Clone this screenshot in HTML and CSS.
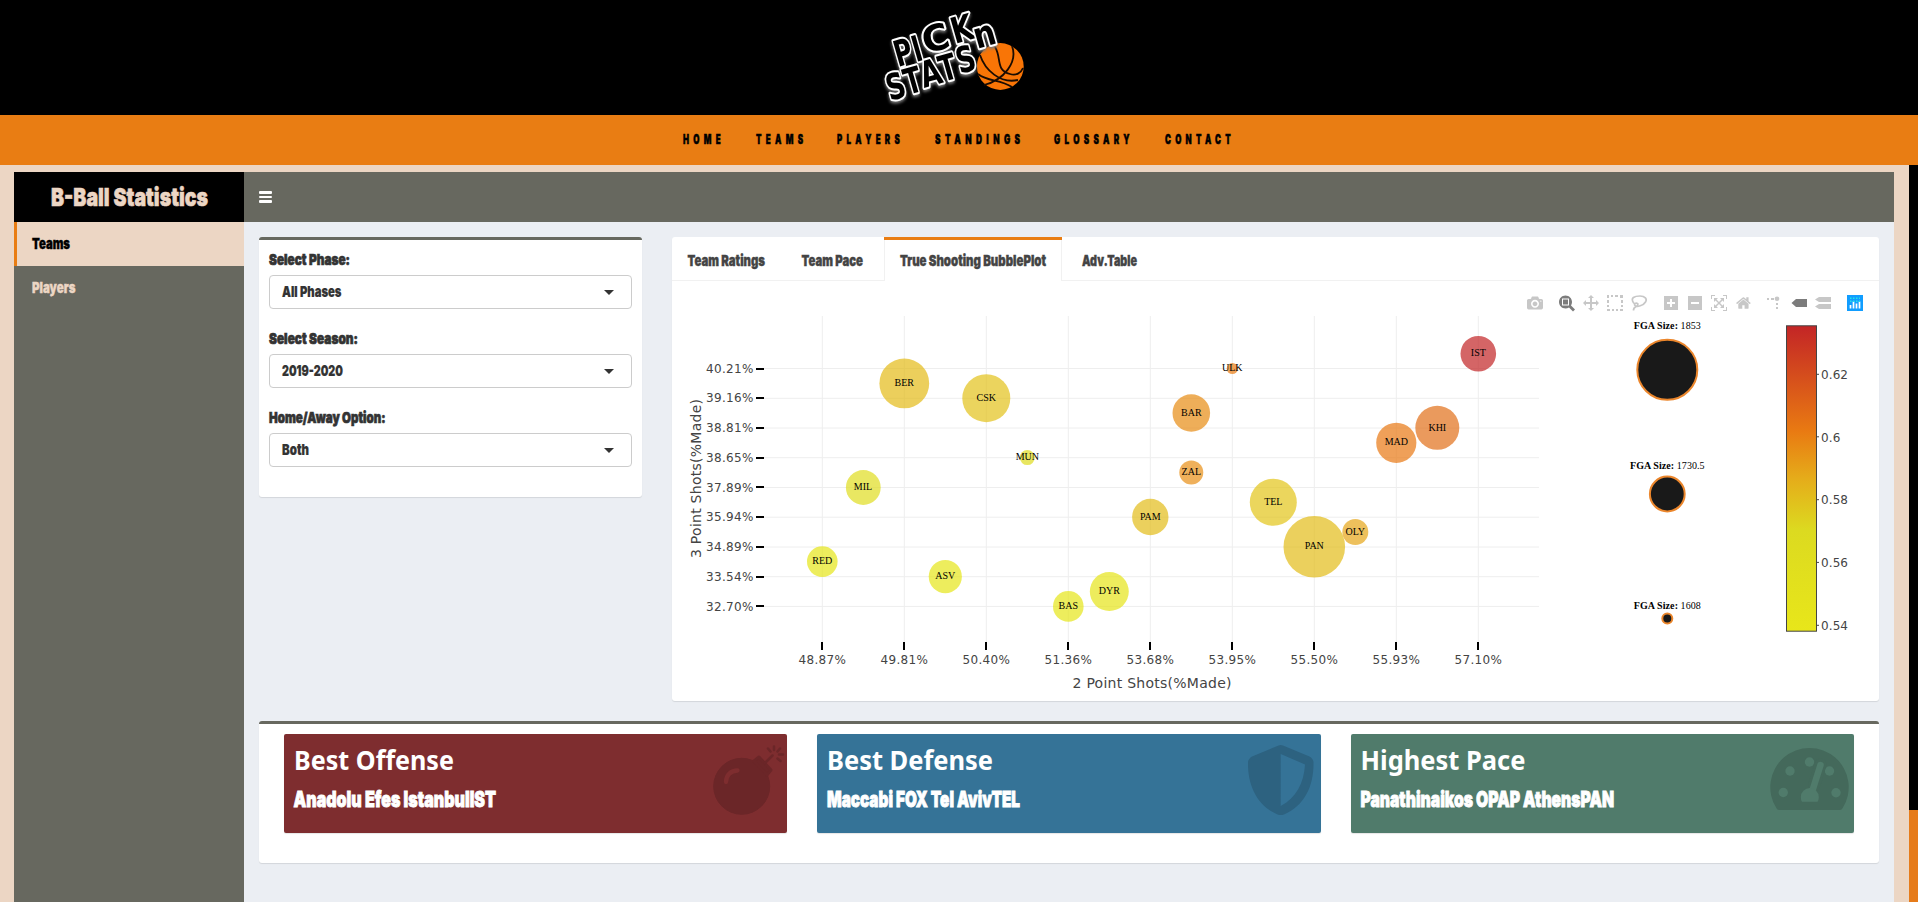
FILE: index.html
```html
<!DOCTYPE html>
<html lang="en">
<head>
<meta charset="utf-8">
<title>Pick n Stats</title>
<link rel="stylesheet" href="styles.css">
</head>
<body>
<header class="masthead">
  <svg class="logo" width="150" height="115" viewBox="880 0 150 115">
    <circle cx="1000.3" cy="66.5" r="23.4" fill="#f97506"/>
    <g fill="none" stroke="#1a0c02" stroke-width="1.8">
      <path d="M980 55C985 70 1000 84 1018 80M995 47C1002 58 995 70 1010 74C1016 76 1021 73 1023 68M1012 46C1018 62 1004 80 984 85M978 74C988 82 1000 79 1012 87"/>
    </g>
    <g class="logo-text">
      <text transform="translate(898 67) rotate(-16)" textLength="18" lengthAdjust="spacingAndGlyphs">P</text>
      <text transform="translate(916 62) rotate(-16)" textLength="9" lengthAdjust="spacingAndGlyphs">I</text>
      <text transform="translate(926 54) rotate(-16)" textLength="27" lengthAdjust="spacingAndGlyphs">C</text>
      <text transform="translate(955 44) rotate(-16)" textLength="22" lengthAdjust="spacingAndGlyphs">K</text>
      <text transform="translate(977 49) rotate(-16)" textLength="22" lengthAdjust="spacingAndGlyphs">n</text>
      <text transform="translate(890 101) rotate(-16)" textLength="19" lengthAdjust="spacingAndGlyphs">S</text>
      <text transform="translate(908 95) rotate(-16)" textLength="17" lengthAdjust="spacingAndGlyphs">T</text>
      <text transform="translate(924 88) rotate(-16)" textLength="21" lengthAdjust="spacingAndGlyphs">A</text>
      <text transform="translate(943 82) rotate(-16)" textLength="17" lengthAdjust="spacingAndGlyphs">T</text>
      <text transform="translate(960 74) rotate(-16)" textLength="19" lengthAdjust="spacingAndGlyphs">S</text>
    </g>
  </svg>
</header>
<nav class="nav">
  <svg width="44" height="20"><text y="14" textLength="42" lengthAdjust="spacingAndGlyphs">HOME</text></svg>
  <svg width="53" height="20"><text y="14" textLength="51.5" lengthAdjust="spacingAndGlyphs">TEAMS</text></svg>
  <svg width="69" height="20"><text y="14" textLength="67" lengthAdjust="spacingAndGlyphs">PLAYERS</text></svg>
  <svg width="91" height="20"><text y="14" textLength="89.5" lengthAdjust="spacingAndGlyphs">STANDINGS</text></svg>
  <svg width="82" height="20"><text y="14" textLength="80" lengthAdjust="spacingAndGlyphs">GLOSSARY</text></svg>
  <svg width="72" height="20"><text y="14" textLength="70" lengthAdjust="spacingAndGlyphs">CONTACT</text></svg>
</nav>
<div class="stage">
  <div class="app">
    <div class="brand"><svg width="157" height="30"><text class="brand-text" y="23.5" textLength="157" lengthAdjust="spacingAndGlyphs">B-Ball Statistics</text></svg></div>
    <div class="topbar"><i></i><i></i><i></i></div>
    <aside class="side">
      <a class="item active"><svg width="50" height="20"><text y="15" textLength="38" lengthAdjust="spacingAndGlyphs">Teams</text></svg></a>
      <a class="item"><svg width="50" height="20"><text y="15" textLength="43.5" lengthAdjust="spacingAndGlyphs">Players</text></svg></a>
    </aside>
    <main class="content">
      <div class="row">
        <section class="box filters">
          <svg class="label" width="200" height="20"><text y="15" textLength="81" lengthAdjust="spacingAndGlyphs">Select Phase:</text></svg>
          <div class="select"><svg width="200" height="20"><text y="15" textLength="59.5" lengthAdjust="spacingAndGlyphs">All Phases</text></svg><b></b></div>
          <svg class="label" width="200" height="20"><text y="15" textLength="89" lengthAdjust="spacingAndGlyphs">Select Season:</text></svg>
          <div class="select"><svg width="200" height="20"><text y="15" textLength="61" lengthAdjust="spacingAndGlyphs">2019-2020</text></svg><b></b></div>
          <svg class="label" width="200" height="20"><text y="15" textLength="116.5" lengthAdjust="spacingAndGlyphs">Home/Away Option:</text></svg>
          <div class="select"><svg width="200" height="20"><text y="15" textLength="27" lengthAdjust="spacingAndGlyphs">Both</text></svg><b></b></div>
        </section>
        <section class="box tabs">
          <div class="tablist">
            <div class="tab"><svg width="78" height="20"><text x="-.5" y="15" textLength="77.5" lengthAdjust="spacingAndGlyphs">Team Ratings</text></svg></div>
            <div class="tab"><svg width="62" height="20"><text x="-.5" y="15" textLength="61.5" lengthAdjust="spacingAndGlyphs">Team Pace</text></svg></div>
            <div class="tab on"><svg width="146" height="20"><text y="15" textLength="146" lengthAdjust="spacingAndGlyphs">True Shooting BubblePlot</text></svg></div>
            <div class="tab"><svg width="56" height="20"><text x="-1" y="15" textLength="55" lengthAdjust="spacingAndGlyphs">Adv.Table</text></svg></div>
          </div>
          <svg class="plot" width="1207" height="420" viewBox="672 281 1207 420">
            <defs>
              <linearGradient id="scale" x1="0" y1="0" x2="0" y2="1">
                <stop offset="0" stop-color="#c32526"/>
                <stop offset=".345" stop-color="#e97a12"/>
                <stop offset=".5" stop-color="#e5ac1a"/>
                <stop offset=".67" stop-color="#dcda20"/>
                <stop offset="1" stop-color="#e8e61a"/>
              </linearGradient>
            </defs>
            <path class="grid" d="M822.3 316V642M904.3 316V642M986.3 316V642M1068.3 316V642M1150.3 316V642M1232.3 316V642M1314.3 316V642M1396.3 316V642M1478.3 316V642M764 368.5H1539M764 398.3H1539M764 428H1539M764 457.7H1539M764 487.5H1539M764 517.2H1539M764 547H1539M764 576.7H1539M764 606.4H1539"/>
            <path class="ticks" d="M822 642v8M904 642v8M986 642v8M1068 642v8M1150 642v8M1232 642v8M1314 642v8M1396 642v8M1478 642v8M756 369h8M756 398h8M756 428h8M756 458h8M756 487h8M756 517h8M756 547h8M756 577h8M756 606h8"/>
            <g class="bubbles">
              <circle cx="822.3" cy="561.6" r="15.3" fill="#e6e619"/>
              <circle cx="863.3" cy="487.5" r="17.4" fill="#e0dd20"/>
              <circle cx="904.3" cy="383.4" r="24.9" fill="#e4bb18"/>
              <circle cx="945.3" cy="576.6" r="16.6" fill="#e6e619"/>
              <circle cx="986.3" cy="398.2" r="24" fill="#e3c21b"/>
              <circle cx="1027.3" cy="457.6" r="7.5" fill="#dfdc1f"/>
              <circle cx="1068.3" cy="606.4" r="15.3" fill="#e6e619"/>
              <circle cx="1109.3" cy="591.6" r="19.5" fill="#e6e519"/>
              <circle cx="1150.3" cy="517" r="18.2" fill="#e3bd19"/>
              <circle cx="1191.3" cy="413" r="18.8" fill="#e88c14"/>
              <circle cx="1191.3" cy="472.4" r="12" fill="#e99016"/>
              <circle cx="1232.3" cy="368.5" r="5.6" fill="#e97c12"/>
              <circle cx="1273.3" cy="502.3" r="23.5" fill="#e3c51a"/>
              <circle cx="1314.3" cy="546.8" r="30.8" fill="#e3bd19"/>
              <circle cx="1355.3" cy="532" r="13" fill="#e6a618"/>
              <circle cx="1396.3" cy="442.8" r="20.1" fill="#e97914"/>
              <circle cx="1437.3" cy="427.8" r="22" fill="#e27019"/>
              <circle cx="1478.3" cy="353.7" r="17.8" fill="#c32526"/>
            </g>
            <g class="names">
              <text x="822.3" y="564">RED</text><text x="863" y="490">MIL</text><text x="904.3" y="386">BER</text><text x="945.3" y="579">ASV</text><text x="986.3" y="401">CSK</text><text x="1027.3" y="460">MUN</text><text x="1068.3" y="609">BAS</text><text x="1109.3" y="594">DYR</text><text x="1150.3" y="520">PAM</text><text x="1191.3" y="416">BAR</text><text x="1191.3" y="475">ZAL</text><text x="1232.3" y="371">ULK</text><text x="1273.3" y="505">TEL</text><text x="1314.3" y="549">PAN</text><text x="1355.3" y="535">OLY</text><text x="1396.3" y="445">MAD</text><text x="1437.3" y="431">KHI</text><text x="1478.3" y="356">IST</text>
              <text x="1667.3" y="329" textLength="67"><tspan>FGA Size:</tspan> 1853</text>
              <text x="1667.3" y="469" textLength="74.5"><tspan>FGA Size:</tspan> 1730.5</text>
              <text x="1667.3" y="609" textLength="67"><tspan>FGA Size:</tspan> 1608</text>
            </g>
            <g fill="#191919" stroke="#eb862c" stroke-width="2"><circle cx="1667.3" cy="369.8" r="30"/><circle cx="1667.3" cy="494" r="17.4"/><circle cx="1667.3" cy="618.6" r="5"/></g>
            <g class="axis">
              <text x="706" y="373" textLength="47.3">40.21%</text><text x="706" y="402" textLength="47.3">39.16%</text><text x="706" y="432" textLength="47.3">38.81%</text><text x="706" y="462" textLength="47.3">38.65%</text><text x="706" y="492" textLength="47.3">37.89%</text><text x="706" y="521" textLength="47.3">35.94%</text><text x="706" y="551" textLength="47.3">34.89%</text><text x="706" y="581" textLength="47.3">33.54%</text><text x="706" y="611" textLength="47.3">32.70%</text>
              <text x="798.5" y="664" textLength="47.3">48.87%</text><text x="880.5" y="664" textLength="47.3">49.81%</text><text x="962.5" y="664" textLength="47.3">50.40%</text><text x="1044.5" y="664" textLength="47.3">51.36%</text><text x="1126.5" y="664" textLength="47.3">53.68%</text><text x="1208.5" y="664" textLength="47.3">53.95%</text><text x="1290.5" y="664" textLength="47.3">55.50%</text><text x="1372.5" y="664" textLength="47.3">55.93%</text><text x="1454.5" y="664" textLength="47.3">57.10%</text>
              <text x="1821" y="379" textLength="27">0.62</text><text x="1821" y="441.5" textLength="19.5">0.6</text><text x="1821" y="504" textLength="27">0.58</text><text x="1821" y="567" textLength="27">0.56</text><text x="1821" y="630" textLength="27">0.54</text>
              <text class="title" x="1072.5" y="688" textLength="159">2 Point Shots(%Made)</text>
              <text class="title" transform="translate(701 558) rotate(-90)" textLength="159">3 Point Shots(%Made)</text>
            </g>
            <rect x="1786.5" y="325.8" width="30" height="305.4" fill="url(#scale)" stroke="#444"/>
            <path stroke="#444" d="M1817 374.3h2M1817 436.8h2M1817 499.7h2M1817 562.4h2M1817 625.3h2"/>
            <g fill="#c7c7c7">
              <path transform="matrix(.016 0 0 -.016 1527 308.6)" d="m500 450c-83 0-150-67-150-150 0-83 67-150 150-150 83 0 150 67 150 150 0 83-67 150-150 150z m400 150h-120c-16 0-34 13-39 29l-31 93c-6 15-23 28-40 28h-340c-16 0-34-13-39-28l-31-94c-6-15-23-28-40-28h-120c-55 0-100-45-100-100v-450c0-55 45-100 100-100h800c55 0 100 45 100 100v450c0 55-45 100-100 100z m-400-550c-138 0-250 112-250 250 0 138 112 250 250 250 138 0 250-112 250-250 0-138-112-250-250-250z m365 380c-19 0-35 16-35 35 0 19 16 35 35 35 19 0 35-16 35-35 0-19-16-35-35-35z"/>
              <path fill="#7c7c7c" fill-rule="evenodd" transform="matrix(.016 0 0 -.016 1559 309)" d="m1000-25l-250 251c40 63 63 138 63 218 0 224-182 406-407 406-224 0-406-182-406-406s183-406 407-406c80 0 155 22 218 62l250-250 125 125z m-812 250l0 438 437 0 0-438-437 0z m62 375l313 0 0-312-313 0 0 312z"/>
              <path transform="matrix(.016 0 0 -.016 1583 308.6)" d="m1000 350l-187 188 0-125-250 0 0 250 125 0-188 187-187-187 125 0 0-250-250 0 0 125-188-188 186-187 0 125 252 0 0-250-125 0 187-188 188 188-125 0 0 250 250 0 0-126 187 188z"/>
              <path d="M1607 295h2v3h-2zM1611 295h2v2h-2zM1615 295h3v2h-3zM1620 295h3v3h-3zM1607 300h2v3h-2zM1607 305h2v2h-2zM1607 309h3v2h-3zM1612 309h2v2h-2zM1616 309h2v2h-2zM1620 309h3v2h-3zM1621 300h2v3h-2zM1621 305h2v2h-2z"/>
              <path fill="none" stroke="#c7c7c7" stroke-width="1.7" d="M1634 303.5C1629.500 297.500 1635 296 1640 296C1645 296 1647.500 299 1645.500 302C1643.500 305.500 1637 307.500 1635 305.500C1633.500 304 1636 302 1638 304C1638.500 307 1633 306 1633.500 310.500"/>
              <path transform="matrix(.016 0 0 -.016 1664 308.6)" d="m1 787l0-875 875 0 0 875-875 0z m687-500l-187 0 0-187-125 0 0 187-188 0 0 125 188 0 0 187 125 0 0-187 187 0 0-125z"/>
              <path transform="matrix(.016 0 0 -.016 1688 308.6)" d="m0 788l0-876 875 0 0 876-875 0z m688-500l-500 0 0 125 500 0 0-125z"/>
              <path transform="matrix(.016 0 0 -.016 1711 308.6)" d="m250 850l-187 0-63 0 0-62 0-188 63 0 0 188 187 0 0 62z m688 0l-188 0 0-62 188 0 0-188 62 0 0 188 0 62-62 0z m-875-938l0 188-63 0 0-188 0-62 63 0 187 0 0 62-187 0z m875 188l0-188-188 0 0-62 188 0 62 0 0 62 0 188-62 0z m-125 188l-1 0-93-94-156 156 156 156 92-93 2 0 0 250-250 0 0-2 93-92-156-156-156 156 94 92 0 2-250 0 0-250 0 0 93 93 157-156-157-156-93 94 0 0 0-250 250 0 0 0-94 93 156 157 156-157-93-93 0 0 250 0 0 250z"/>
              <path transform="matrix(.016 0 0 -.016 1736 308.6)" d="m786 296v-267q0-15-11-26t-25-10h-214v214h-143v-214h-214q-15 0-25 10t-11 26v267q0 1 0 2t0 2l321 264 321-264q1-1 1-4z m124 39l-34-41q-5-5-12-6h-2q-7 0-12 3l-386 322-386-322q-7-4-13-4-7 2-12 7l-35 41q-4 5-3 13t6 12l401 334q18 15 42 15t43-15l136-114v109q0 8 5 13t13 5h107q8 0 13-5t5-13v-227l122-102q5-5 6-12t-4-13z"/>
              <path d="M1767 298h2v2h-2zM1771 298h3v2h-3zM1776 303h2v2h-2zM1776 307h2v2h-2z"/><circle cx="1777" cy="298.700" r="2.300"/>
              <path fill="#7c7c7c" d="M1791.500 303l4.500-4h11v8h-11z"/>
              <path d="M1815 299.500l4-2.500h12v5h-12zM1815 306.500l4-2.500h12v5h-12z"/>
            </g>
            <path fill="#119dff" d="M1847 295h16v16h-16z"/>
            <path stroke="#fff" stroke-width="1.700" d="M1850.500 308.500v-3.500M1853.500 308.500v-7M1856.500 308.500v-5M1859.500 308.500v-7"/>
            <path stroke="#24e5e5" stroke-width="1.400" stroke-dasharray="1.500" d="M1850 298.300h10M1850 301.300h10"/>
          </svg>
        </section>
      </div>
      <section class="box cards">
        <div class="card offense">
          <svg width="330" height="99"><text class="head" x="10" y="36" textLength="160" lengthAdjust="spacingAndGlyphs">Best Offense</text><text class="sub" x="9.500" y="73" textLength="202.500" lengthAdjust="spacingAndGlyphs">Anadolu Efes IstanbulIST</text></svg>
          <svg class="pic" width="89" height="99">
            <circle cx="43.700" cy="52.300" r="28"/>
            <path d="M56 27l5-4 12 13-4 5z" stroke-width="3" stroke-linejoin="round"/>
            <path fill="none" stroke-width="2.500" stroke-linecap="round" d="M67 29l7.500-7.500M76 12.500v3.500M70 14.500l2.500 3M82 14.500l-2.500 3M81 20.500h4M79.500 24.500l3 2.500"/>
            <path class="cut highlight" stroke-width="4.300" stroke-linecap="round" d="M28 48C28 41 33 36.500 39.500 36.500"/>
          </svg>
        </div>
        <div class="card defense">
          <svg width="330" height="99"><text class="head" x="10" y="36" textLength="166" lengthAdjust="spacingAndGlyphs">Best Defense</text><text class="sub" x="10" y="73" textLength="193" lengthAdjust="spacingAndGlyphs">Maccabi FOX Tel AvivTEL</text></svg>
          <svg class="pic" width="90" height="99"><path stroke="none" fill-rule="evenodd" d="M47.500 11.600Q49.700 10.600 52 11.600L78.500 22.500Q82 24.500 82.500 28C83 51 74 72 53 80.400Q49.700 81.500 46.500 80.400C26 72 16.500 51 17 28Q17.500 24.500 21 22.500ZM49.700 20V72C65 64 73 49 74 30.500Z"/></svg>
        </div>
        <div class="card pace">
          <svg width="330" height="99"><text class="head" x="9.500" y="36" textLength="165" lengthAdjust="spacingAndGlyphs">Highest Pace</text><text class="sub" x="9.500" y="73" textLength="253.500" lengthAdjust="spacingAndGlyphs">Panathinaikos OPAP AthensPAN</text></svg>
          <svg class="pic" width="90" height="99">
            <path stroke="none" d="M12.600 74.500A39.200 39.200 0 1 1 78.400 74.500Q77.500 76 75.500 76H15.500Q13.500 76 12.600 74.500Z"/>
            <g class="cut"><g stroke="none"><circle cx="19.300" cy="58.500" r="4.700"/><circle cx="26" cy="37" r="4.700"/><circle cx="45.500" cy="28" r="4.700"/><circle cx="65.500" cy="37" r="4.700"/><circle cx="72" cy="58.700" r="4.700"/></g></g>
            <path stroke-width="12" stroke-linecap="round" d="M56.500 30.500L50 52"/>
            <g class="cut"><path stroke-width="6.500" stroke-linecap="round" d="M56.500 31L48 58"/><path stroke="none" d="M38 67.800Q36.800 66 36.800 63A9 9 0 0 1 54.800 63Q54.800 66 53.500 67.800Z"/></g>
          </svg>
        </div>
      </section>
    </main>
  </div>
  <div class="rail"></div>
</div>
</body>
</html>
```
FILE: styles.css
```css
* { box-sizing: border-box; }
html, body { margin: 0; height: 902px; overflow: hidden; }
body { display: flex; flex-direction: column; background: #ecd6c4; font-family: Inter, "Open Sans", sans-serif; }
svg { display: block; flex: none; overflow: visible; }
text { font-family: Inter, "Open Sans", sans-serif; font-size: 15px; font-weight: 900; fill: #333; }
.masthead { height: 115px; background: #000; display: flex; justify-content: center; padding-right: 8px; }
.logo-text { filter: drop-shadow(0 2px 1.500px #777); }
.logo-text text { font-family: "DejaVu Sans", sans-serif; font-weight: 700; font-size: 36px; fill: #000; stroke: #fff; stroke-width: 4px; stroke-linejoin: round; paint-order: stroke; }
.nav { height: 50px; background: #e97d13; display: flex; align-items: center; justify-content: center; gap: 28.500px; padding-left: 2px; }
.nav text { font-size: 13px; fill: #000; stroke: #000; stroke-width: .5px; letter-spacing: 7px; }
.stage { flex: 1; display: flex; min-height: 0; }
.app { flex: 1; margin: 7px 15px 0 14px; display: grid; grid-template: 50px 680px / 230px 1fr; }
.rail { width: 9px; background: linear-gradient(#000 645px, #e67b1a 645px); }
.brand { background: #000; display: flex; align-items: center; justify-content: center; }
.brand .brand-text { font-size: 25px; fill: #ecd6c4; stroke: #ecd6c4; stroke-width: .6px; }
.topbar { background: #67685f; padding: 19px 15px; display: flex; flex-direction: column; gap: 2px; }
.topbar i { width: 13px; height: 3px; border-radius: 1px; background: #fff; }
.side { background: #67685f; }
.item { display: flex; height: 44px; align-items: center; padding-left: 18px; }
.item text { fill: #ecd6c4; stroke: #ecd6c4; stroke-width: .4px; }
.item.active { background: #ecd6c4; border-left: 3px solid #e97d13; padding-left: 15px; }
.item.active text { fill: #000; stroke: #000; }
.content { background: #ebeef3; padding: 15px; display: flex; flex-direction: column; gap: 20px; }
.row { display: flex; gap: 30px; align-items: flex-start; }
.box { background: #fff; border-radius: 3px; border-top: 3px solid #67685f; box-shadow: 0 1px 1px rgba(0,0,0,.1); }
.filters { width: 383px; height: 260px; padding: 10px; }
.label { height: 20px; margin-bottom: 5px; }
.label text { stroke: #333; stroke-width: .7px; }
.select { height: 34px; border: 1px solid #ccc; border-radius: 4px; margin-bottom: 20px; padding: 0 17px 0 12px; display: flex; align-items: center; justify-content: space-between; }
.select text { stroke: #333; stroke-width: .2px; }
.select b { border: 5px solid transparent; border-top-color: #333; border-bottom: 0; }
.tabs { width: 1207px; height: 464px; border-top: 0; }
.tablist { height: 44px; display: flex; border-bottom: 1px solid #f1f1f1; }
.tab { height: 44px; padding: 0 15px 0 16px; margin-right: 5px; border-top: 3px solid transparent; display: flex; align-items: center; }
.tab text { fill: #444; stroke: #444; stroke-width: .4px; }
.tab.on { width: 178px; border-top-color: #e97d13; background: #fff; box-shadow: inset 1px 0 #f1f1f1, inset -1px 0 #f1f1f1; }
.grid { fill: none; stroke: #eee; stroke-width: 1; }
.ticks { fill: none; stroke: #000; stroke-width: 2; }
.bubbles { opacity: .7; }
.names text { font-family: "Liberation Serif", serif; font-size: 10px; font-weight: 400; fill: #000; text-anchor: middle; }
.names tspan { font-weight: 700; }
.axis text { font-family: "DejaVu Sans", sans-serif; font-size: 12px; font-weight: 400; fill: #444; }
.axis .title { font-size: 14px; }
.cards { height: 142px; padding: 10px 25px; display: flex; gap: 30px; align-items: flex-start; }
.card { flex: 1; height: 99px; border-radius: 2px; display: flex; justify-content: space-between; box-shadow: 0 1px 1px rgba(0,0,0,.1); }
.card .head { font-family: "Noto Sans", sans-serif; font-weight: 700; font-size: 27px; fill: #fff; }
.card .sub { font-size: 22px; fill: #fff; stroke: #fff; stroke-width: .9px; }
.offense { --base: #7e2d2f; --ink: #6b2628; background: var(--base); }
.defense { --base: #357397; --ink: #2d6280; background: var(--base); }
.pace { --base: #507b6b; --ink: #44695b; background: var(--base); }
.pic { fill: var(--ink); stroke: var(--ink); }
.cut { fill: var(--base); stroke: var(--base); }
.highlight { fill: none; }
```
